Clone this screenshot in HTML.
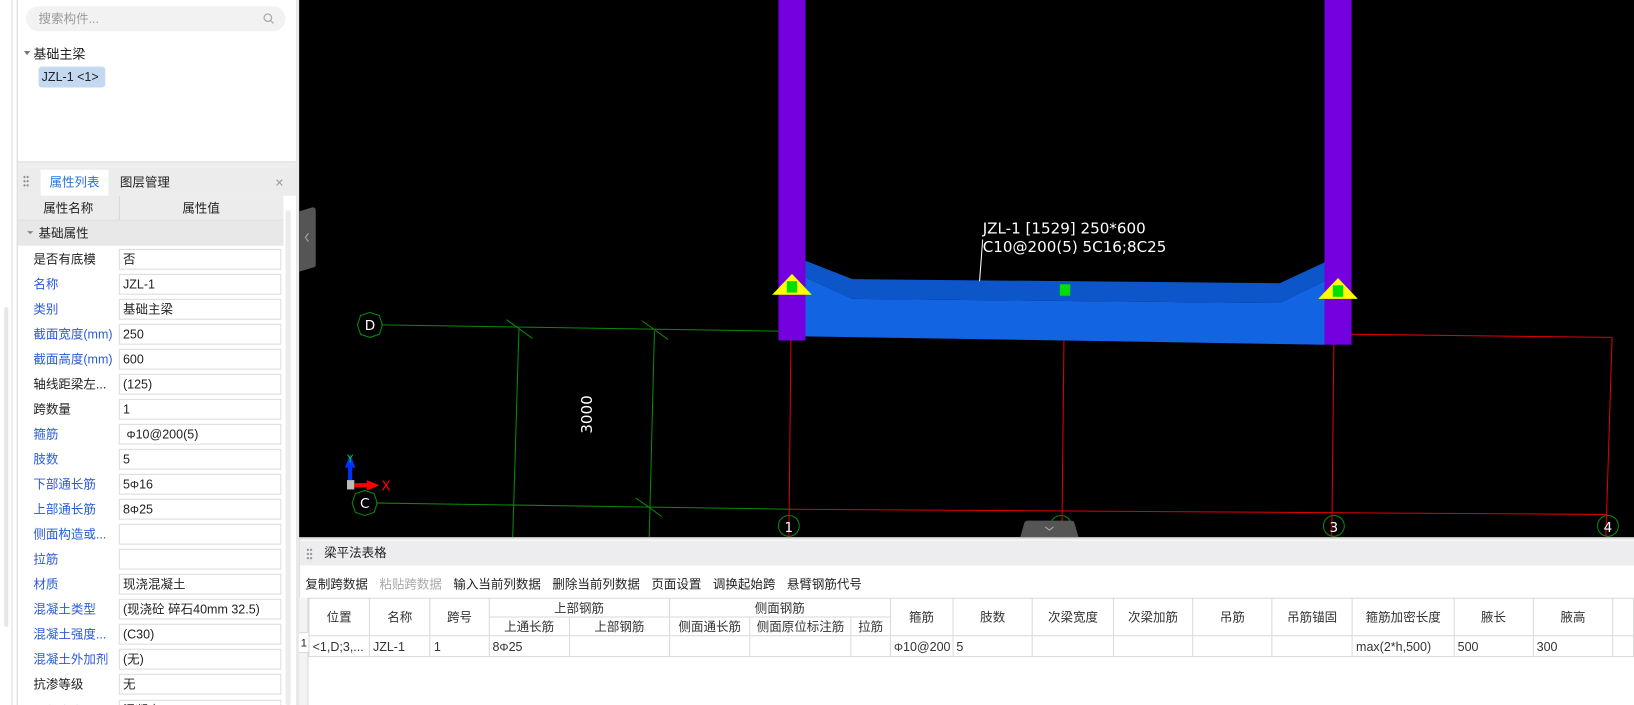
<!DOCTYPE html>
<html><head><meta charset="utf-8"><style>
*{margin:0;padding:0;box-sizing:border-box}
html,body{width:1634px;height:705px;overflow:hidden;background:#fff}
#w{position:absolute;left:0;top:0;width:1568px;height:677px;transform:scale(1.04209,1.04136);transform-origin:0 0;font-family:"Liberation Sans","Noto Sans CJK SC",sans-serif;font-size:12px;color:#222;overflow:hidden}
.a{position:absolute}
.lbl{position:absolute;left:32px;font-size:12px;line-height:20px;white-space:nowrap}
.b{color:#2a5bd7}
.inp{position:absolute;left:114px;width:156px;height:20px;border:1px solid #dcdcdc;background:#fff;padding-left:3px;line-height:18px;font-size:12px;white-space:nowrap;overflow:hidden}
.r{font-size:11px}
table{border-collapse:collapse;position:absolute;left:296px;top:574px;table-layout:fixed}
td{border:1px solid #dadada;font-size:12px;white-space:nowrap;overflow:hidden;text-align:center;color:#333;padding:0}
td.l{text-align:left;padding-left:3px}
.tb span{margin-right:11px}
</style></head><body><div id="w">
<!-- left strip -->
<div class="a" style="left:11px;top:0;width:1px;height:677px;background:#ddd"></div>
<div class="a" style="left:4px;top:295px;width:4px;height:307px;background:#e6e6e6;border-radius:2px"></div>
<div class="a" style="left:16px;top:0;width:1px;height:677px;background:#d6d6d6"></div>
<div class="a" style="left:284px;top:0;width:3px;height:677px;background:#e9e9e9"></div>
<!-- top panel -->
<div class="a" style="left:17px;top:155px;width:267px;height:6px;background:#eee;border-top:1px solid #ddd"></div>
<div class="a" style="left:25px;top:6px;width:249px;height:24px;background:#f2f2f2;border-radius:12px"></div>
<div class="a" style="left:37px;top:10px;color:#999;line-height:16px">搜索构件...</div>
<svg class="a" style="left:252px;top:12px" width="12" height="12"><circle cx="5" cy="5" r="3.6" fill="none" stroke="#aaa" stroke-width="1.2"/><line x1="7.6" y1="7.6" x2="10.5" y2="10.5" stroke="#aaa" stroke-width="1.2"/></svg>
<div class="a" style="left:23px;top:49px;width:0;height:0;border-left:3px solid transparent;border-right:3px solid transparent;border-top:4px solid #777"></div>
<div class="a" style="left:32px;top:44px;line-height:16px;font-size:12.5px">基础主梁</div>
<div class="a" style="left:37px;top:64px;width:64px;height:20px;background:#c3d9f1;border-radius:3px;line-height:20px;padding-left:3px;font-size:12px">JZL-1 &lt;1&gt;</div>
<!-- props panel -->
<div class="a" style="left:17px;top:161px;width:267px;height:27px;background:#ececec"></div>
<div class="a" style="left:22px;top:168px;width:6px;height:13px;background:radial-gradient(circle,#888 0.9px,transparent 1.1px) 0 0/3px 4px"></div>
<div class="a" style="left:39px;top:163px;width:65px;height:25px;background:#fff;color:#2670e0;line-height:25px;text-align:center">属性列表</div>
<div class="a" style="left:115px;top:163px;line-height:25px">图层管理</div>
<div class="a" style="left:264px;top:163px;line-height:25px;color:#999;font-size:14px">×</div>
<div class="a" style="left:17px;top:188px;width:255px;height:24px;background:#ececec;border-bottom:1px solid #ddd"></div>
<div class="a" style="left:114px;top:188px;width:1px;height:24px;background:#d6d6d6"></div>
<div class="a" style="left:17px;top:188px;width:97px;line-height:24px;text-align:center">属性名称</div>
<div class="a" style="left:114px;top:188px;width:158px;line-height:24px;text-align:center">属性值</div>
<div class="a" style="left:274px;top:202px;width:5px;height:475px;background:#ececec;border-radius:2px"></div>
<div class="a" style="left:17px;top:212px;width:255px;height:24px;background:#e8e8e8"></div>
<div class="a" style="left:26px;top:222px;border-left:3px solid transparent;border-right:3px solid transparent;border-top:3px solid #888"></div>
<div class="a" style="left:37px;top:212px;line-height:24px">基础属性</div>
<div class="lbl" style="top:239px">是否有底模</div><div class="inp" style="top:239px">否</div>
<div class="lbl b" style="top:263px">名称</div><div class="inp" style="top:263px">JZL-1</div>
<div class="lbl b" style="top:287px">类别</div><div class="inp" style="top:287px">基础主梁</div>
<div class="lbl b" style="top:311px">截面宽度(mm)</div><div class="inp" style="top:311px">250</div>
<div class="lbl b" style="top:335px">截面高度(mm)</div><div class="inp" style="top:335px">600</div>
<div class="lbl" style="top:359px">轴线距梁左...</div><div class="inp" style="top:359px">(125)</div>
<div class="lbl" style="top:383px">跨数量</div><div class="inp" style="top:383px">1</div>
<div class="lbl b" style="top:407px">箍筋</div><div class="inp" style="top:407px">&nbsp;<span class="r">Φ</span>10@200(5)</div>
<div class="lbl b" style="top:431px">肢数</div><div class="inp" style="top:431px">5</div>
<div class="lbl b" style="top:455px">下部通长筋</div><div class="inp" style="top:455px">5<span class="r">Φ</span>16</div>
<div class="lbl b" style="top:479px">上部通长筋</div><div class="inp" style="top:479px">8<span class="r">Φ</span>25</div>
<div class="lbl b" style="top:503px">侧面构造或...</div><div class="inp" style="top:503px"></div>
<div class="lbl b" style="top:527px">拉筋</div><div class="inp" style="top:527px"></div>
<div class="lbl b" style="top:551px">材质</div><div class="inp" style="top:551px">现浇混凝土</div>
<div class="lbl b" style="top:575px">混凝土类型</div><div class="inp" style="top:575px">(现浇砼 碎石40mm 32.5)</div>
<div class="lbl b" style="top:599px">混凝土强度...</div><div class="inp" style="top:599px">(C30)</div>
<div class="lbl b" style="top:623px">混凝土外加剂</div><div class="inp" style="top:623px">(无)</div>
<div class="lbl" style="top:647px">抗渗等级</div><div class="inp" style="top:647px">无</div>
<div class="lbl b" style="top:673px">混凝土类别</div><div class="inp" style="top:672px">混凝土</div>
<!-- viewport -->
<svg class="a" style="left:287px;top:0" width="1281" height="516" viewBox="287 0 1281 516">
<rect x="287" y="0" width="1281" height="516" fill="#000"/>
<g stroke="#0a8a0a" stroke-width="1" fill="none">
<line x1="366" y1="312" x2="747" y2="318"/>
<line x1="361" y1="483" x2="760" y2="489"/>
<line x1="498" y1="316" x2="492" y2="516"/>
<line x1="628" y1="318" x2="623" y2="516"/>
<line x1="486" y1="307" x2="511" y2="325"/><line x1="616" y1="308" x2="641" y2="326"/><line x1="610" y1="478" x2="635" y2="496"/>
<polygon points="355,300 364,303 367,312 364,321 355,324 346,321 343,312 346,303"/>
<polygon points="350,471 359,474 362,483 359,492 350,495 341,492 338,483 341,474"/>
<circle cx="757" cy="505" r="10"/><circle cx="1018" cy="505" r="10"/><circle cx="1280" cy="505" r="10"/><circle cx="1543" cy="505" r="10"/>
</g>
<g stroke="#e00000" stroke-width="1" fill="none">
<line x1="760" y1="489" x2="1541" y2="494"/>
<line x1="1297" y1="321" x2="1547" y2="324"/>
<line x1="1547" y1="324" x2="1541" y2="516"/>
<line x1="759" y1="327" x2="757" y2="516"/>
<line x1="1021" y1="325" x2="1019" y2="516"/>
<line x1="1280" y1="331" x2="1278" y2="516"/>
</g>
<polygon points="772,266 818,287 1228,291 1271,270 1271,331 772,323" fill="#1264e3"/>
<polygon points="772,250 818,268 1228,272 1271,252 1271,270 1228,291 818,287 772,266" fill="#0c56c9"/>
<rect x="747" y="0" width="26" height="327" fill="#7500df"/>
<rect x="1271" y="0" width="26" height="331" fill="#7500df"/>
<polygon points="760,263 779,283 741,283" fill="#ffff00"/><rect x="755" y="270" width="10" height="11" fill="#00e000"/>
<polygon points="1284,267 1303,287 1265,287" fill="#ffff00"/><rect x="1279" y="274" width="10" height="11" fill="#00e000"/>
<rect x="1017" y="273" width="10" height="11" fill="#00e000"/>
<line x1="943" y1="230" x2="940" y2="270" stroke="#fff" stroke-width="1"/>
<g fill="#fff" font-family="DejaVu Sans,sans-serif" font-size="14.5">
<text x="943" y="224">JZL-1 [1529] 250*600</text>
<text x="943" y="242">C10@200(5) 5C16;8C25</text>
<text x="568" y="398" transform="rotate(-90 568 398)" text-anchor="middle">3000</text>
<text x="355" y="317" text-anchor="middle" font-size="13">D</text>
<text x="350" y="488" text-anchor="middle" font-size="13">C</text>
<text x="757" y="511" text-anchor="middle" font-size="13">1</text>
<text x="1280" y="511" text-anchor="middle" font-size="13">3</text>
<text x="1543" y="511" text-anchor="middle" font-size="13">4</text>
</g>
<rect x="333" y="461" width="7" height="9" fill="#bbb"/>
<rect x="334" y="446" width="4" height="15" fill="#0030ff"/><polygon points="336,436 341,449 331,449" fill="#0030ff"/>
<text x="336" y="444" fill="#00d000" font-size="10" text-anchor="middle" font-family="DejaVu Sans,sans-serif">Y</text>
<rect x="340" y="464" width="15" height="4" fill="#f00"/><polygon points="364,466 352,461 352,471" fill="#f00"/>
<text x="366" y="471" fill="#f00" font-size="13" font-family="DejaVu Sans,sans-serif">X</text>
<path d="M287,203 L300,199 Q303,199 303,202 L303,254 Q303,257 300,257 L287,261 Z" fill="#555"/>
<path d="M296,224 L293,228 L296,232" stroke="#aaa" fill="none"/>
<path d="M979,516 L983,502 Q984,500 986,500 L1028,500 Q1030,500 1031,502 L1035,516 Z" fill="#555"/>
<path d="M1003,506 L1007,509 L1011,506" stroke="#aaa" fill="none"/>
</svg>
<!-- bottom panel -->
<div class="a" style="left:287px;top:516px;width:1281px;height:2px;background:#ddd"></div>
<div class="a" style="left:287px;top:518px;width:1px;height:159px;background:#ddd"></div>
<div class="a" style="left:288px;top:519px;width:1280px;height:24px;background:#ededef"></div>
<div class="a" style="left:294px;top:526px;width:6px;height:13px;background:radial-gradient(circle,#888 0.9px,transparent 1.1px) 0 0/3px 4px"></div>
<div class="a" style="left:311px;top:519px;line-height:24px">梁平法表格</div>
<div class="a tb" style="left:293px;top:553px;line-height:16px;white-space:nowrap"><span>复制跨数据</span><span style="color:#aaa">粘贴跨数据</span><span>输入当前列数据</span><span>删除当前列数据</span><span>页面设置</span><span>调换起始跨</span><span>悬臂钢筋代号</span></div>
<div class="a" style="left:287px;top:574px;width:9px;height:103px;border-right:1px solid #dadada;background:#f3f3f3"></div>
<div class="a" style="left:287px;top:607px;width:9px;height:20px;line-height:20px;font-size:11px;text-align:center;background:#fff;border-top:1px solid #dadada;border-bottom:1px solid #dadada">1</div>
<table>
<colgroup><col style="width:58px"><col style="width:59px"><col style="width:57px"><col style="width:78px"><col style="width:97px"><col style="width:78px"><col style="width:97px"><col style="width:38px"><col style="width:60px"><col style="width:78px"><col style="width:78px"><col style="width:77px"><col style="width:77px"><col style="width:78px"><col style="width:98px"><col style="width:77px"><col style="width:78px"><col style="width:20px"></colgroup>
<tr style="height:16px"><td rowspan="2">位置</td><td rowspan="2">名称</td><td rowspan="2">跨号</td><td colspan="2">上部钢筋</td><td colspan="3">侧面钢筋</td><td rowspan="2">箍筋</td><td rowspan="2">肢数</td><td rowspan="2">次梁宽度</td><td rowspan="2">次梁加筋</td><td rowspan="2">吊筋</td><td rowspan="2">吊筋锚固</td><td rowspan="2">箍筋加密长度</td><td rowspan="2">腋长</td><td rowspan="2">腋高</td><td rowspan="2"></td></tr>
<tr style="height:17px"><td>上通长筋</td><td>上部钢筋</td><td>侧面通长筋</td><td>侧面原位标注筋</td><td>拉筋</td></tr>
<tr style="height:20px"><td class="l">&lt;1,D;3,...</td><td class="l">JZL-1</td><td class="l">1</td><td class="l">8<span class="r">Φ</span>25</td><td></td><td></td><td></td><td></td><td class="l"><span class="r">Φ</span>10@200</td><td class="l">5</td><td></td><td></td><td></td><td></td><td class="l">max(2*h,500)</td><td class="l">500</td><td class="l">300</td><td></td></tr>
</table>
</div></body></html>
